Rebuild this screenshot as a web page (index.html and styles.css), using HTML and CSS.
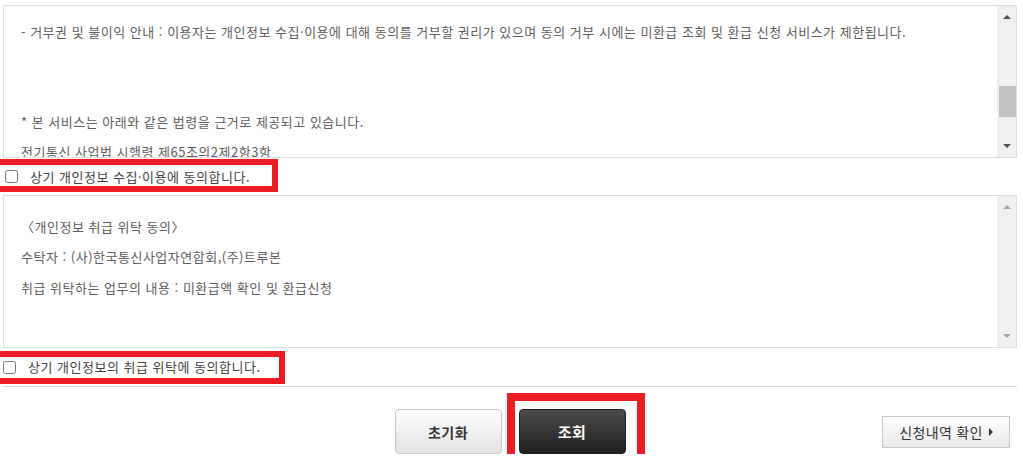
FILE: index.html
```html
<!DOCTYPE html>
<html lang="ko">
<head>
    <meta charset="UTF-8">
    <meta name="viewport" content="width=device-width, initial-scale=1.0">
    <title>미환급액 조회</title>
    <link rel="stylesheet" href="styles.css">
</head>
<body>
    <div class="wrap">
        <div class="agree-box">
            <div class="agree-text first">
                <p>- 거부권 및 불이익 안내 : 이용자는 개인정보 수집·이용에 대해 동의를 거부할 권리가 있으며 동의 거부 시에는 미환급 조회 및 환급 신청 서비스가 제한됩니다.</p>
                <p>&nbsp;</p>
                <p>&nbsp;</p>
                <p>* 본 서비스는 아래와 같은 법령을 근거로 제공되고 있습니다.</p>
                <p>전기통신 사업법 시행령 제65조의2제2항3항</p>
            </div>
            <div class="scrollbar">
                <span class="arrow up"></span>
                <div class="track"><span class="thumb"></span></div>
                <span class="arrow down"></span>
            </div>
        </div>
        <div class="agree-row">
            <label class="agree-check mark1"><input type="checkbox"> 상기 개인정보 수집·이용에 동의합니다.</label>
        </div>

        <div class="agree-box">
            <div class="agree-text second">
                <p>〈개인정보 취급 위탁 동의〉</p>
                <p>수탁자 : (사)한국통신사업자연합회,(주)트루본</p>
                <p>취급 위탁하는 업무의 내용 : 미환급액 확인 및 환급신청</p>
            </div>
            <div class="scrollbar disabled">
                <span class="arrow up"></span>
                <div class="track"></div>
                <span class="arrow down"></span>
            </div>
        </div>
        <div class="agree-row">
            <label class="agree-check mark2"><input type="checkbox"> 상기 개인정보의 취급 위탁에 동의합니다.</label>
        </div>

        <div class="btn-area">
            <div class="btn-center">
                <button class="btn btn-reset">초기화</button>
                <button class="btn btn-search">조회</button>
            </div>
            <button class="btn-history">신청내역 확인 <span class="tri"></span></button>
        </div>
    </div>
</body>
</html>
```

FILE: styles.css
```css
* {
    box-sizing: border-box;
    margin: 0;
    padding: 0;
}

body {
    font-family: "Noto Sans CJK KR", "Noto Sans", sans-serif;
    background: #fff;
    color: #555;
}

.wrap {
    margin: 0 6px 0 3px;
    padding-top: 5px;
}

/* 약관 박스 */
.agree-box {
    display: flex;
    height: 153px;
    border: 1px solid #dedede;
}

.agree-text {
    flex: 1;
    overflow: hidden;
    padding: 0 17px;
    font-size: 13px;
    line-height: 30px;
    letter-spacing: 0.5px;
    color: #5e5e5e;
    white-space: nowrap;
}

.agree-text.first {
    padding-top: 11px;
}

.agree-text.second {
    padding-top: 16px;
}

.agree-text.second p:nth-child(3) {
    margin-top: 1px;
}

/* 스크롤바 */
.scrollbar {
    width: 19px;
    display: flex;
    flex-direction: column;
    background: #f0f0f0;
}

.scrollbar .arrow {
    height: 22px;
    display: flex;
    justify-content: center;
    align-items: center;
}

.scrollbar .arrow::before {
    content: "";
    border-left: 4px solid transparent;
    border-right: 4px solid transparent;
}

.scrollbar .up::before {
    border-bottom: 4px solid #505050;
}

.scrollbar .down::before {
    border-top: 4px solid #505050;
}

.scrollbar.disabled .up::before {
    border-bottom-color: #a3a3a3;
}

.scrollbar.disabled .down::before {
    border-top-color: #a3a3a3;
}

.track {
    flex: 1;
}

.thumb {
    display: block;
    height: 31px;
    margin: 58px 0 0 2px;
    background: #c1c1c1;
}

/* 동의 체크 */
.agree-row {
    height: 37px;
    display: flex;
    align-items: center;
}

.agree-row:nth-of-type(4) {
    height: 38px;
}

.agree-check {
    position: relative;
    display: flex;
    align-items: center;
    font-size: 13px;
    line-height: 20px;
    letter-spacing: 0.5px;
    color: #444;
}

.agree-check input {
    width: 13px;
    height: 13px;
    margin: 0 12px 0 2px;
}

.mark2 input {
    margin-left: 0;
}

.mark1::after,
.mark2::after {
    content: "";
    position: absolute;
    border: 6px solid #ed1c24;
    pointer-events: none;
}

.mark1::after {
    top: -8px;
    bottom: -5px;
    left: -12px;
    right: -28px;
}

.mark2::after {
    top: -6px;
    bottom: -7px;
    left: -12px;
    right: -24px;
}

/* 버튼 영역 */
.btn-area {
    display: grid;
    grid-template-columns: 1fr auto 1fr;
    align-items: center;
    border-top: 1px solid #dcdcdc;
    padding-top: 22px;
}

.btn-center {
    grid-column: 2;
    display: flex;
    gap: 17px;
}

.btn {
    width: 107px;
    height: 45px;
    border-radius: 4px;
    font-family: inherit;
    font-size: 14px;
    font-weight: bold;
    letter-spacing: 0.5px;
    cursor: pointer;
}

.btn-reset {
    background: linear-gradient(#fdfdfd, #e3e3e3);
    border: 1px solid #c6c6c6;
    color: #333;
}

.btn-search {
    position: relative;
    background: linear-gradient(#4c4c4c, #202020);
    border: 1px solid #1e1e1e;
    color: #fff;
    font-size: 15px;
}

.btn-search::after {
    content: "";
    position: absolute;
    top: -17px;
    bottom: -13px;
    left: -13px;
    right: -20px;
    border: 8px solid #ed1c24;
    pointer-events: none;
}

.btn-history {
    grid-column: 3;
    justify-self: end;
    margin-right: 7px;
    width: 128px;
    height: 32px;
    background: linear-gradient(#ffffff, #e9e9e9);
    border: 1px solid #c9c9c9;
    font-family: inherit;
    font-size: 14px;
    letter-spacing: 0.3px;
    color: #333;
    display: flex;
    align-items: center;
    justify-content: center;
    gap: 6px;
    cursor: pointer;
}

.btn-history .tri {
    border-top: 4px solid transparent;
    border-bottom: 4px solid transparent;
    border-left: 4px solid #333;
}
```
